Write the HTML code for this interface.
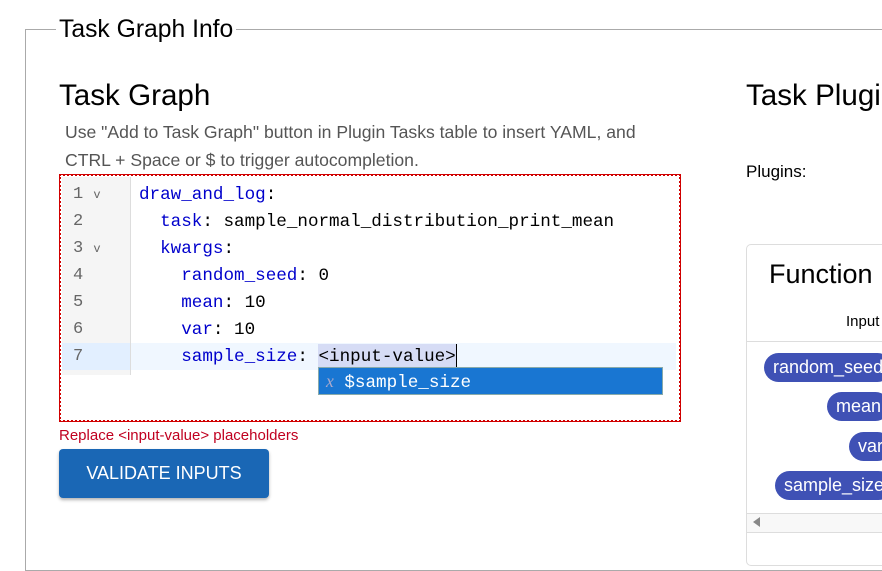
<!DOCTYPE html><html><head><style>
body{margin:0;width:882px;height:558px;overflow:hidden;background:#fff;font-family:"Liberation Sans",sans-serif;position:relative}
.a{position:absolute}
.ln{position:absolute;left:73px;color:#666;font-family:"Liberation Mono",monospace;font-size:17px}
.c{position:absolute;color:#0000cc;font-family:"Liberation Mono",monospace;font-size:17.6px;white-space:pre}
.c b{font-weight:normal;color:#000}
.pill{position:absolute;background:#3f51b5;color:#fff;font-size:18px;border-radius:15px;height:29px;line-height:29px;padding:0 9px}
</style></head><body>
<div class="a" style="left:25px;top:29px;width:870px;height:540px;border:1px solid #aaa;border-right:none"></div>
<div class="a" style="left:56px;top:16px;background:#fff;padding:0 3px;font-size:24.7px;color:#000">Task Graph Info</div>
<div class="a" style="left:59px;top:79px;font-size:29.6px">Task Graph</div>
<div class="a" style="left:746px;top:79px;font-size:29.6px;white-space:nowrap">Task Plugi</div>
<div class="a" style="left:65px;top:118px;font-size:17.6px;color:#555;line-height:28px;white-space:nowrap">Use "Add to Task Graph" button in Plugin Tasks table to insert YAML, and<br>CTRL + Space or $ to trigger autocompletion.</div>
<div class="a" style="left:746px;top:162px;font-size:17px">Plugins:</div>
<div class="a" style="left:59px;top:174px;width:618px;height:244px;border:2px dotted #d00000;outline:1px solid #d00000;outline-offset:-1px"></div>
<div class="a" style="left:62px;top:177px;width:68px;height:198px;background:#f5f5f5;border-right:1px solid #ddd"></div>
<div class="a" style="left:62px;top:343px;width:68px;height:27px;background:#e2efff"></div>
<div class="a" style="left:131px;top:343px;width:545px;height:27px;background:#f0f7ff"></div>
<div class="ln" style="top:185px">1 <span style="font-size:12px">v</span></div>
<div class="ln" style="top:212px">2</div>
<div class="ln" style="top:239px">3 <span style="font-size:12px">v</span></div>
<div class="ln" style="top:266px">4</div>
<div class="ln" style="top:293px">5</div>
<div class="ln" style="top:320px">6</div>
<div class="ln" style="top:347px">7</div>
<div class="c" style="left:139px;top:185px">draw_and_log<b>:</b></div>
<div class="c" style="left:139px;top:212px">  task<b>: sample_normal_distribution_print_mean</b></div>
<div class="c" style="left:139px;top:239px">  kwargs<b>:</b></div>
<div class="c" style="left:139px;top:266px">    random_seed<b>: 0</b></div>
<div class="c" style="left:139px;top:293px">    mean<b>: 10</b></div>
<div class="c" style="left:139px;top:320px">    var<b>: 10</b></div>
<div class="a" style="left:318px;top:344px;width:138px;height:25px;background:#d6dcf5;border-right:1px solid #000"></div>
<div class="c" style="left:139px;top:347px">    sample_size<b>: &lt;input-value&gt;</b></div>
<div class="a" style="left:318px;top:367px;width:343px;height:26px;background:#1976d2;border:1px solid #8aa"></div>
<div class="c" style="left:326px;top:371px;color:#fff"><i style="font-family:'Liberation Serif',serif;color:#aac">x</i> $sample_size</div>
<div class="a" style="left:59px;top:427px;font-size:15px;color:#c00020">Replace &lt;input-value&gt; placeholders</div>
<div class="a" style="left:59px;top:449px;width:210px;height:49px;background:#1a67b5;border-radius:4px;color:#fff;font-size:18px;line-height:49px;text-align:center;box-shadow:0 2px 3px rgba(0,0,0,.3)">VALIDATE INPUTS</div>
<div class="a" style="left:746px;top:244px;width:140px;height:320px;border:1px solid #ddd;border-radius:5px"></div>
<div class="a" style="left:769px;top:259px;font-size:27px">Function</div>
<div class="a" style="left:846px;top:313px;font-size:15px">Input</div>
<div class="a" style="left:747px;top:341px;width:140px;border-top:1px solid #ddd"></div>
<div class="pill" style="left:764px;top:353px">random_seed</div>
<div class="pill" style="left:827px;top:392px">mean</div>
<div class="pill" style="left:849px;top:432px">var</div>
<div class="pill" style="left:775px;top:471px">sample_size</div>
<div class="a" style="left:747px;top:513px;width:140px;height:18px;background:#f8f8f8;border-top:1px solid #ddd;border-bottom:1px solid #ddd"></div>
<div class="a" style="left:753px;top:517px;width:0;height:0;border-top:5px solid transparent;border-bottom:5px solid transparent;border-right:7px solid #888"></div>
</body></html>
